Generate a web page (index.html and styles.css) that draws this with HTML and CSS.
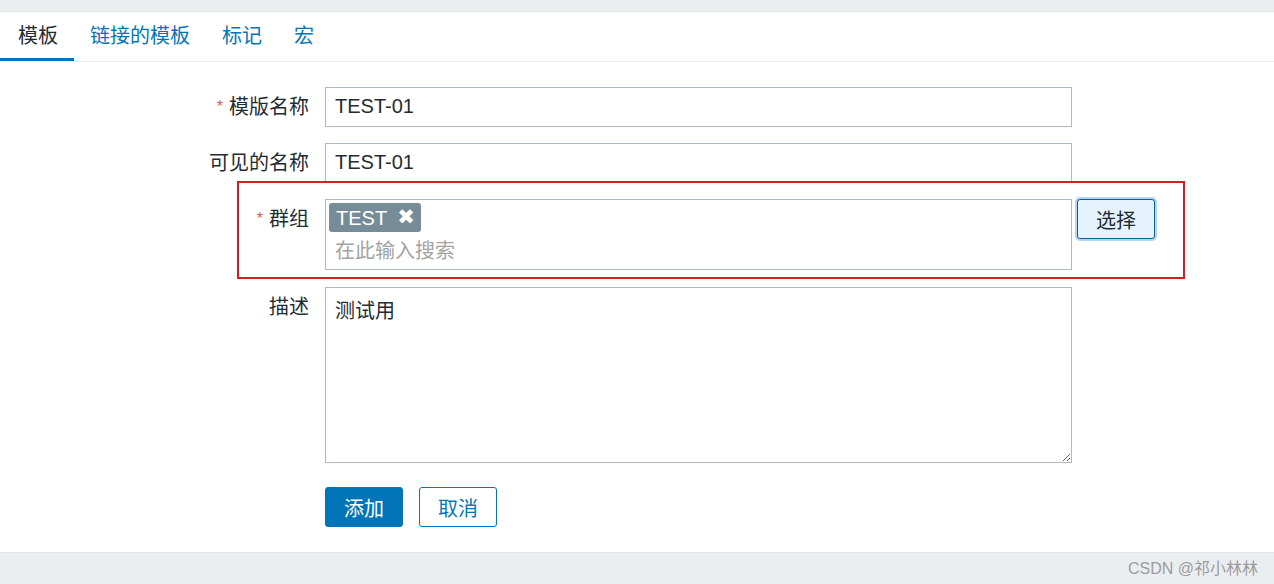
FILE: index.html
```html
<!DOCTYPE html>
<html lang="zh">
<head>
<meta charset="utf-8">
<title>模板</title>
<link rel="stylesheet" href="styles.css">
</head>
<body>
<div class="topstrip"></div>
<div class="tabs">
  <a class="tab active">模板</a>
  <a class="tab">链接的模板</a>
  <a class="tab">标记</a>
  <a class="tab">宏</a>
</div>
<main class="form">
  <div class="row">
    <label class="label"><span class="req">*</span>模版名称</label>
    <div class="field"><div class="input">TEST-01</div></div>
  </div>
  <div class="row">
    <label class="label">可见的名称</label>
    <div class="field"><div class="input">TEST-01</div></div>
  </div>
  <div class="row group-row">
    <label class="label"><span class="req">*</span>群组</label>
    <div class="field">
      <div class="multiselect">
        <span class="tag">TEST <span class="tag-x">✖</span></span>
        <span class="placeholder">在此输入搜索</span>
      </div>
      <button class="btn-select">选择</button>
    </div>
    <div class="highlight"></div>
  </div>
  <div class="row desc-row">
    <label class="label">描述</label>
    <div class="field"><textarea class="textarea">测试用</textarea></div>
  </div>
  <div class="row actions">
    <div class="label"></div>
    <div class="field">
      <button class="btn-primary">添加</button>
      <button class="btn-cancel">取消</button>
    </div>
  </div>
</main>
<footer class="footer"><span class="credit">CSDN @祁小林林</span></footer>
</body>
</html>
```
FILE: styles.css
```css
* { box-sizing: border-box; }
html, body { margin: 0; padding: 0; }
body {
  width: 1274px;
  height: 584px;
  overflow: hidden;
  background: #ffffff;
  font-family: "Liberation Sans", "Noto Sans CJK SC", sans-serif;
  font-size: 20px;
  color: #1f2c33;
  display: flex;
  flex-direction: column;
}
.topstrip {
  height: 12px;
  background: #ebeef0;
  border-bottom: 1px solid #dde3e6;
  flex: none;
}
.tabs {
  display: flex;
  height: 50px;
  border-bottom: 1px solid #ebeef0;
  flex: none;
}
.tab {
  display: flex;
  align-items: center;
  padding: 0 16px;
  color: #0275b8;
  border-bottom: 3px solid transparent;
  line-height: 1;
  padding-top: 2px;
}
.tab.active {
  color: #1f2c33;
  border-bottom-color: #0275b8;
  padding-left: 18px;
}
.form {
  flex: 1;
  padding-top: 25px;
  display: flex;
  flex-direction: column;
  gap: 16px;
}
.row {
  display: flex;
  align-items: flex-start;
  position: relative;
}
.label {
  width: 309px;
  flex: none;
  text-align: right;
  padding-top: 8px;
  padding-right: 0;
  line-height: 24px;
  color: #1f2c33;
}
.req {
  color: #e45959;
  font-size: 16px;
  margin-right: 6px;
  position: relative;
  top: -2px;
}
.field {
  margin-left: 16px;
  display: flex;
  align-items: flex-start;
}
.input {
  width: 747px;
  height: 40px;
  border: 1px solid #acbbc2;
  padding: 0 9px;
  line-height: 36px;
  color: #1f2c33;
}
.multiselect {
  width: 747px;
  height: 71px;
  border: 1px solid #acbbc2;
  padding: 3px 3px;
  display: flex;
  flex-direction: column;
  align-items: flex-start;
}
.tag {
  background: #768d99;
  color: #ffffff;
  height: 29px;
  line-height: 28px;
  padding: 0 6px 0 7px;
  border-radius: 3px;
  display: inline-flex;
  align-items: center;
}
.tag-x {
  font-family: "DejaVu Sans", sans-serif;
  font-size: 21px;
  margin-left: 10px;
  line-height: 1;
}
.placeholder {
  color: #a3a3a3;
  margin-left: 6px;
  margin-top: 6px;
  line-height: 26px;
}
.btn-select {
  margin-left: 5px;
  width: 78px;
  height: 40px;
  background: #e5f3fe;
  border: 1px solid #0a5e93;
  border-radius: 3px;
  box-shadow: 0 0 0 2px #b2d6f3;
  font-family: "Liberation Sans", "Noto Sans CJK SC", sans-serif;
  font-size: 20px;
  color: #1f2c33;
  padding: 0;
}
.highlight {
  position: absolute;
  left: 237px;
  top: -18px;
  width: 948px;
  height: 98px;
  border: 2px solid #e8141e;
  pointer-events: none;
}
.desc-row { margin-top: 1px; }
.textarea {
  width: 747px;
  height: 176px;
  border: 1px solid #acbbc2;
  padding: 8px 9px;
  font-family: "Liberation Sans", "Noto Sans CJK SC", sans-serif;
  font-size: 20px;
  line-height: 30px;
  color: #1f2c33;
  resize: both;
  margin: 0;
  display: block;
}
.actions { margin-top: 8px; }
.actions .label { padding: 0; }
.btn-primary, .btn-cancel {
  height: 40px;
  border-radius: 3px;
  font-family: "Liberation Sans", "Noto Sans CJK SC", sans-serif;
  font-size: 20px;
  padding: 0;
  width: 78px;
}
.btn-primary {
  background: #0275b8;
  border: 1px solid #0275b8;
  color: #ffffff;
}
.btn-cancel {
  margin-left: 16px;
  background: #ffffff;
  border: 1px solid #0275b8;
  color: #0275b8;
}
.footer {
  flex: none;
  height: 32px;
  background: #ebeef0;
  border-top: 1px solid #dde3e6;
  display: flex;
  justify-content: flex-end;
  align-items: center;
  padding-right: 16px;
  padding-bottom: 4px;
}
.credit {
  color: #9c9c9c;
  font-size: 16px;
}
```
